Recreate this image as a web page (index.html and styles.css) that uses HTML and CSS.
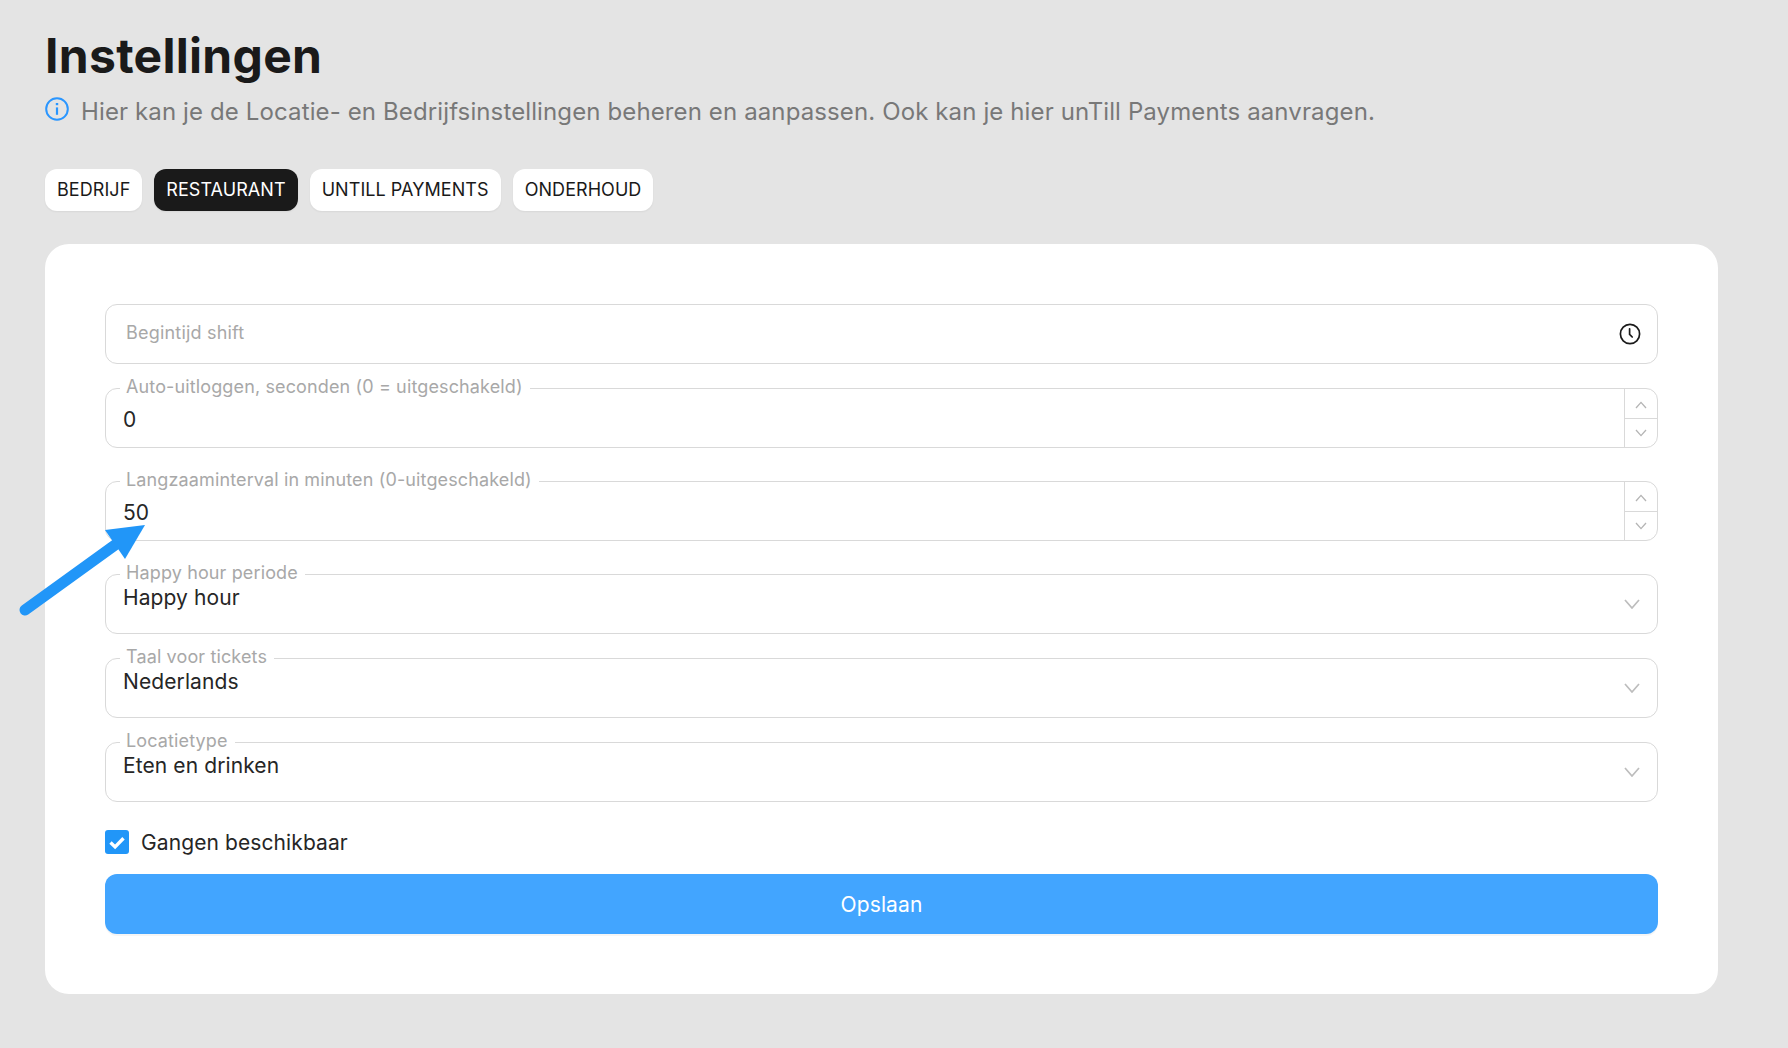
FILE: index.html
```html
<!DOCTYPE html>
<html lang="nl">
<head>
<meta charset="utf-8">
<title>Instellingen</title>
<link rel="stylesheet" href="styles.css">
</head>
<body>
<main class="page">
  <h1 class="title">Instellingen</h1>
  <p class="intro">
    <svg class="info-icon" viewBox="0 0 24 24" width="24" height="24" fill="none" stroke="#2a96ff" stroke-width="2"><circle cx="12" cy="12" r="10.8"/><path d="M12 10.4v7.4" stroke-width="2.2"/><path d="M12 6v2.2" stroke-width="2.4"/></svg>
    <span>Hier kan je de Locatie- en Bedrijfsinstellingen beheren en aanpassen. Ook kan je hier unTill Payments aanvragen.</span>
  </p>
  <nav class="tabs">
    <a class="tab">BEDRIJF</a>
    <a class="tab tab-active">RESTAURANT</a>
    <a class="tab">UNTILL PAYMENTS</a>
    <a class="tab">ONDERHOUD</a>
  </nav>
  <section class="card">
    <div class="field field-first">
      <span class="placeholder">Begintijd shift</span>
      <svg class="clock" viewBox="0 0 22 22" width="22" height="22" fill="none" stroke="#1a1a1a" stroke-width="1.7"><circle cx="11" cy="11" r="9.6"/><path d="M10.6 5.8v5.6l2.6 2.6" stroke-linecap="round"/></svg>
    </div>
    <div class="field field-number gap-24">
      <label class="legend">Auto-uitloggen, seconden (0 = uitgeschakeld)</label>
      <span class="value value-number">0</span>
      <div class="stepper">
        <span class="step"><svg viewBox="0 0 12 8" width="12" height="8" class="step-icon"><path d="M1 7l5-5.6L11 7"/></svg></span>
        <span class="step step-down"><svg viewBox="0 0 12 8" width="12" height="8" class="step-icon"><path d="M1 1l5 5.6L11 1"/></svg></span>
      </div>
    </div>
    <div class="field field-number gap-33">
      <label class="legend">Langzaaminterval in minuten (0-uitgeschakeld)</label>
      <span class="value value-number">50</span>
      <div class="stepper">
        <span class="step"><svg viewBox="0 0 12 8" width="12" height="8" class="step-icon"><path d="M1 7l5-5.6L11 7"/></svg></span>
        <span class="step step-down"><svg viewBox="0 0 12 8" width="12" height="8" class="step-icon"><path d="M1 1l5 5.6L11 1"/></svg></span>
      </div>
    </div>
    <div class="field field-select gap-33">
      <label class="legend">Happy hour periode</label>
      <span class="value">Happy hour</span>
      <svg class="chevron" viewBox="0 0 16 10" width="16" height="10"><path d="M1 1l7 8 7-8"/></svg>
    </div>
    <div class="field field-select gap-24">
      <label class="legend">Taal voor tickets</label>
      <span class="value">Nederlands</span>
      <svg class="chevron" viewBox="0 0 16 10" width="16" height="10"><path d="M1 1l7 8 7-8"/></svg>
    </div>
    <div class="field field-select gap-24">
      <label class="legend">Locatietype</label>
      <span class="value">Eten en drinken</span>
      <svg class="chevron" viewBox="0 0 16 10" width="16" height="10"><path d="M1 1l7 8 7-8"/></svg>
    </div>
    <label class="check">
      <span class="box"><svg viewBox="0 0 24 24" width="24" height="24" fill="none" stroke="#fff" stroke-width="3.4"><path d="M5.5 12.5l4.6 4.4 8.4-8.6"/></svg></span>
      <span>Gangen beschikbaar</span>
    </label>
    <button class="save" type="button">Opslaan</button>
  </section>
</main>
<svg class="arrow" viewBox="0 0 160 110" width="160" height="110"><path d="M25 102L115 37" stroke="#2196f8" stroke-width="11" stroke-linecap="round" fill="none"/><path d="M145 17L105 22 125 51z" fill="#2196f8"/></svg>
</body>
</html>
```
FILE: styles.css
```css
* { box-sizing: border-box; }
html, body { margin: 0; height: 100%; }
body {
  background: #e4e4e4;
  font-family: Inter, "Liberation Sans", sans-serif;
  color: #1a1a1a;
  position: relative;
  overflow: hidden;
}
.page { padding: 26px 70px 0 45px; }
.title {
  margin: 0;
  font-size: 48px;
  line-height: 60px;
  font-weight: 700;
  letter-spacing: .3px;
  color: #1a1a1a;
}
.intro {
  display: flex;
  align-items: center;
  gap: 12px;
  margin: 10px 0 0;
  height: 32px;
  font-size: 24px;
  line-height: 32px;
  letter-spacing: .12px;
  color: #787878;
}
.info-icon { flex: none; margin-top: -6px; }
.tabs { display: flex; gap: 12px; margin-top: 41px; }
.tab {
  display: block;
  height: 42px;
  padding: 0 12px;
  background: #fff;
  border-radius: 12px;
  font-size: 18px;
  line-height: 42px;
  letter-spacing: .06px;
  color: #1a1a1a;
  box-shadow: 0 1px 2px rgba(0,0,0,.06);
}
.tab-active { background: #1a1a1a; color: #fff; }
.card {
  margin-top: 33px;
  height: 750px;
  padding: 60px;
  background: #fff;
  border-radius: 24px;
}
.field {
  position: relative;
  display: flex;
  height: 60px;
  border: 1px solid #d9d9d9;
  border-radius: 12px;
}
.gap-24 { margin-top: 24px; }
.gap-33 { margin-top: 33px; }
.field-first {
  align-items: center;
  justify-content: space-between;
  padding: 0 16px 0 20px;
}
.placeholder { font-size: 18px; letter-spacing: .2px; color: #a8a8a8; margin-top: -3px; }
.clock { flex: none; }
.legend {
  position: absolute;
  top: -12px;
  left: 14px;
  padding: 0 7px 0 6px;
  background: #fff;
  font-size: 18px;
  line-height: 20px;
  letter-spacing: .13px;
  color: #a8a8a8;
}
.value { padding: 9px 0 0 17px; line-height: 28px; letter-spacing: .1px; color: #262626; font-size: 21px; }
.value-number { padding-top: 17px; }
.stepper {
  margin-left: auto;
  width: 33px;
  display: flex;
  flex-direction: column;
  border-left: 1px solid #d9d9d9;
}
.step {
  flex: 1;
  display: flex;
  align-items: center;
  justify-content: center;
}
.step-icon { margin-top: 3px; }
.step-down .step-icon { margin-top: 0; }
.step-down { border-top: 1px solid #d9d9d9; }
.step-icon path, .chevron path { fill: none; stroke: #b4b4b4; stroke-width: 1.3; }
.chevron { margin: 24px 17px 0 auto; }
.chevron path { stroke: #bdbdbd; stroke-width: 1.7; }
.check {
  display: flex;
  align-items: center;
  gap: 12px;
  margin-top: 28px;
  height: 24px;
  font-size: 21px;
  letter-spacing: .1px;
  color: #262626;
}
.box {
  display: block;
  width: 24px;
  height: 24px;
  background: #2196f8;
  border-radius: 3px;
}
.box svg { display: block; }
.save {
  display: block;
  width: 100%;
  height: 60px;
  margin-top: 20px;
  border: 0;
  border-radius: 12px;
  background: #42a5ff;
  color: #fff;
  font: 400 21px Inter, "Liberation Sans", sans-serif;
  letter-spacing: .1px;
  box-shadow: 0 2px 0 rgba(0,0,0,.04);
}
.arrow { position: absolute; left: 0; top: 508px; }
```
